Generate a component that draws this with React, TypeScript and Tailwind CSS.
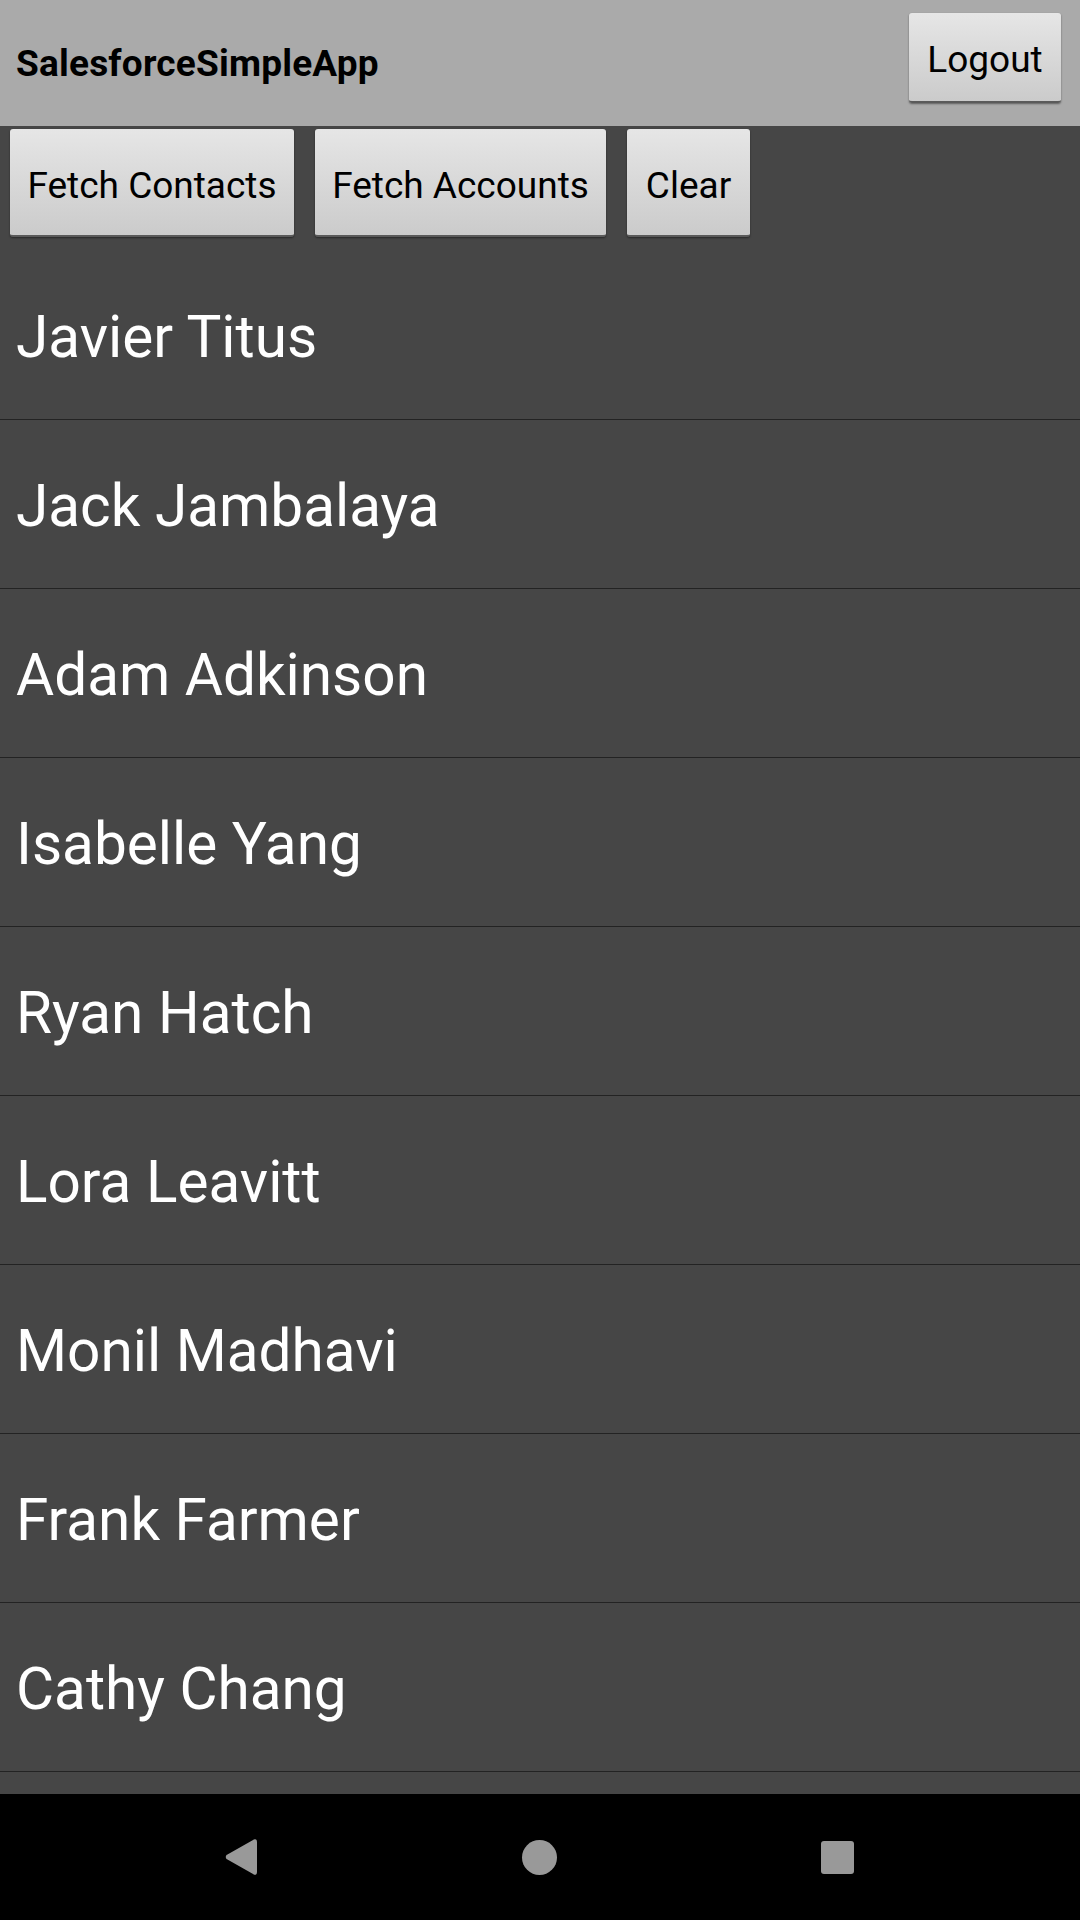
const CONTACTS = [
  "Javier Titus",
  "Jack Jambalaya",
  "Adam Adkinson",
  "Isabelle Yang",
  "Ryan Hatch",
  "Lora Leavitt",
  "Monil Madhavi",
  "Frank Farmer",
  "Cathy Chang",
];

function HoloButton({ label, className = "" }: { label: string; className?: string }) {
  return (
    <button
      className={`flex items-center justify-center rounded-[3px] bg-gradient-to-b from-[#e6e6e6] to-[#cbcbcb] border-b-2 border-[#5a5a5a] shadow-[0_1px_2px_rgba(0,0,0,0.45)] text-[37px] text-black leading-none ${className}`}
    >
      <span className="mt-[6px]">{label}</span>
    </button>
  );
}

export default function App() {
  return (
    <div className="w-[1080px] h-[1920px] flex flex-col bg-[#464646] overflow-hidden font-['Roboto',sans-serif]">
      {/* Title bar */}
      <div className="h-[126px] shrink-0 bg-[#aaaaaa] flex items-center justify-between pl-4 pr-[19px]">
        <h1 className="text-[37px] font-bold text-black tracking-[0.2px] mt-[2px]">SalesforceSimpleApp</h1>
        <HoloButton label="Logout" className="w-[152px] h-[90px] -mt-[11px]" />
      </div>

      {/* Actions */}
      <div className="h-[125px] shrink-0 flex items-start gap-[21px] pl-[10px] pt-[3px]">
        <HoloButton label="Fetch Contacts" className="w-[284px] h-[108px]" />
        <HoloButton label="Fetch Accounts" className="w-[291px] h-[108px]" />
        <HoloButton label="Clear" className="w-[123px] h-[108px]" />
      </div>

      {/* Contact list */}
      <div className="flex-1 overflow-hidden">
        {CONTACTS.map((name) => (
          <div
            key={name}
            className="h-[169px] flex items-center pl-4 border-b border-[#232323] text-white text-[58.5px] leading-none"
          >
            <span className="mt-[5px]">{name}</span>
          </div>
        ))}
      </div>

      {/* Nav bar */}
      <div className="h-[126px] shrink-0 bg-black flex items-center">
        <div className="w-[1080px] relative h-full">
          <svg className="absolute left-[224px] top-[44px]" width="34" height="38" viewBox="0 0 34 38">
            <path
              d="M30 2.5 Q32 1.5 32 4 L32 34 Q32 36.5 30 35.5 L3.5 20.5 Q2 19 3.5 17.5 Z"
              fill="#999999"
              stroke="#999999"
              strokeWidth="2"
              strokeLinejoin="round"
            />
          </svg>
          <div className="absolute left-[522px] top-[46px] w-[35px] h-[35px] rounded-full bg-[#999999]" />
          <div className="absolute left-[821px] top-[47px] w-[33px] h-[33px] rounded-[3px] bg-[#999999]" />
        </div>
      </div>
    </div>
  );
}
